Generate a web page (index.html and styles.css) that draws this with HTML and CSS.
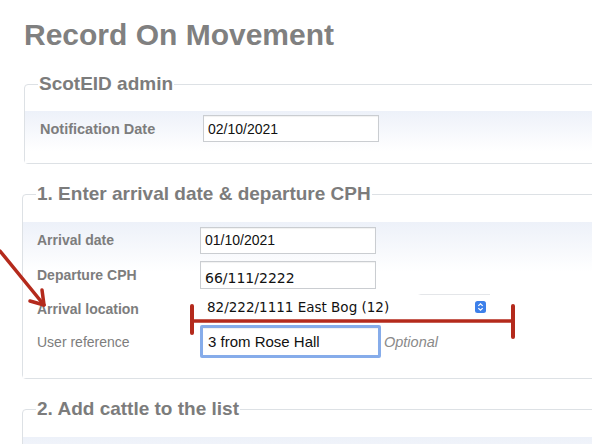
FILE: index.html
```html
<!DOCTYPE html>
<html lang="en">

<head>
    <meta charset="UTF-8">
    <meta name="viewport" content="width=device-width, initial-scale=1.0">
    <title>Record On Movement</title>
    <link rel="stylesheet" href="styles.css">
</head>

<body>
    <div class="page">
        <h1 class="page-title">Record On Movement</h1>

        <fieldset class="panel">
            <legend>ScotEID admin</legend>
            <div class="rows">
                <div class="row">
                    <label class="label strong wide">Notification Date</label>
                    <input class="text-input" type="text" value="02/10/2021">
                </div>
            </div>
        </fieldset>

        <fieldset class="panel">
            <legend>1. Enter arrival date &amp; departure CPH</legend>
            <div class="rows tall">
                <div class="row first">
                    <label class="label strong">Arrival date</label>
                    <input class="text-input" type="text" value="01/10/2021">
                </div>
                <div class="row">
                    <label class="label strong">Departure CPH</label>
                    <input class="text-input cph" type="text" value="66/111/2222">
                </div>
                <div class="row">
                    <label class="label strong">Arrival location</label>
                    <div class="select-box">
                        <span>82/222/1111 East Bog (12)</span>
                        <svg class="stepper" width="11" height="12" viewBox="0 0 11 12">
                            <rect width="11" height="12" rx="2.5" fill="#3d80ea" />
                            <path d="M3.3 4.9 L5.5 2.8 L7.7 4.9 M3.3 7.1 L5.5 9.2 L7.7 7.1" stroke="#fff" stroke-width="1.2" fill="none" />
                        </svg>
                    </div>
                </div>
                <div class="row">
                    <label class="label">User reference</label>
                    <input class="text-input focused" type="text" value="3 from Rose Hall">
                    <span class="hint">Optional</span>
                </div>
            </div>
        </fieldset>

        <fieldset class="panel">
            <legend>2. Add cattle to the list</legend>
            <div class="rows">
                <div class="row"></div>
            </div>
        </fieldset>
    </div>

    <!-- red annotation drawn over the form -->
    <svg class="marks" width="592" height="444" viewBox="0 0 592 444">
        <g stroke="#b42a1c" stroke-width="3.5" fill="none" stroke-linecap="round">
            <path d="M0 251 L44 305" />
            <path d="M42 290 L44 305 L30 301" stroke-linejoin="round" />
            <path d="M192 321 L513 321" />
            <path d="M192 306 L192 333" stroke-width="4" />
            <path d="M513 306 L513 337" stroke-width="4" />
        </g>
    </svg>
</body>

</html>
```

FILE: styles.css
```css
body {
    margin: 0;
    overflow: hidden;
    font-family: "Liberation Sans", Arial, sans-serif;
    background: #fff;
}

.page {
    padding: 17px 0 0 24px;
}

.page-title {
    margin: 0;
    font-size: 30px;
    line-height: 36px;
    font-weight: bold;
    color: #808080;
}

.panel {
    width: 700px;
    margin: 20px 0 0 0;
    padding: 16px 0 0 0;
    border: 1px solid #dde1e5;
    border-radius: 4px;
}

.panel + .panel {
    margin-top: 19px;
    margin-left: -2px;
    padding-top: 17px;
}

.panel legend {
    margin-left: 13px;
    padding: 0 1px;
    font-size: 19px;
    line-height: 22px;
    font-weight: bold;
    color: #7c7c7c;
}

.rows {
    padding: 4px 0 21px 15px;
    background: linear-gradient(#edf1f9, #fff 40px);
}

.rows.tall {
    padding: 0 0 20px 14px;
    background: linear-gradient(#edf1f9, #fff 50px);
}

.row {
    display: flex;
    align-items: center;
    min-height: 27px;
}

.tall .row {
    height: 33px;
}

.tall .row + .row {
    height: 34px;
}

.tall .row + .row + .row {
    height: 33px;
}

.tall .row.first {
    height: 36px;
}

.label {
    width: 163px;
    flex-shrink: 0;
    font-size: 14px;
    color: #7d7d7d;
}

.label.strong {
    font-weight: bold;
}

.label.wide {
    font-size: 14.5px;
}

.text-input {
    box-sizing: border-box;
    width: 176px;
    height: 27px;
    margin: 0;
    padding: 0 4px;
    border: 1px solid #cacdd1;
    box-shadow: inset 0 1px 1px rgba(0, 0, 0, 0.06);
    font-family: "Liberation Sans", Arial, sans-serif;
    font-size: 14px;
    color: #111;
    background: #fff;
    outline: none;
}

.text-input.cph {
    height: 28px;
    padding-top: 5px;
    font-family: "DejaVu Sans", sans-serif;
    font-size: 14px;
}

.text-input.focused {
    width: 181px;
    height: 33px;
    border: 3px solid #86acea;
    border-radius: 2px;
    padding-left: 5px;
    font-size: 15px;
}

.select-box {
    position: relative;
    display: flex;
    align-items: center;
    justify-content: space-between;
    box-sizing: border-box;
    width: 290px;
    height: 26px;
    margin-top: -4px;
    padding: 0 4px 0 7px;
    background: #fff;
    border-top: 1px solid transparent;
    border-image: linear-gradient(90deg, transparent 75%, #e4e6e9 76%) 1;
    font-family: "DejaVu Sans", sans-serif;
    font-size: 13.5px;
    color: #111;
}

.stepper {
    display: block;
}

.hint {
    margin-left: 3px;
    font-size: 14.5px;
    font-style: italic;
    color: #8a8a8a;
}

.marks {
    position: absolute;
    left: 0;
    top: 0;
    pointer-events: none;
}
```
